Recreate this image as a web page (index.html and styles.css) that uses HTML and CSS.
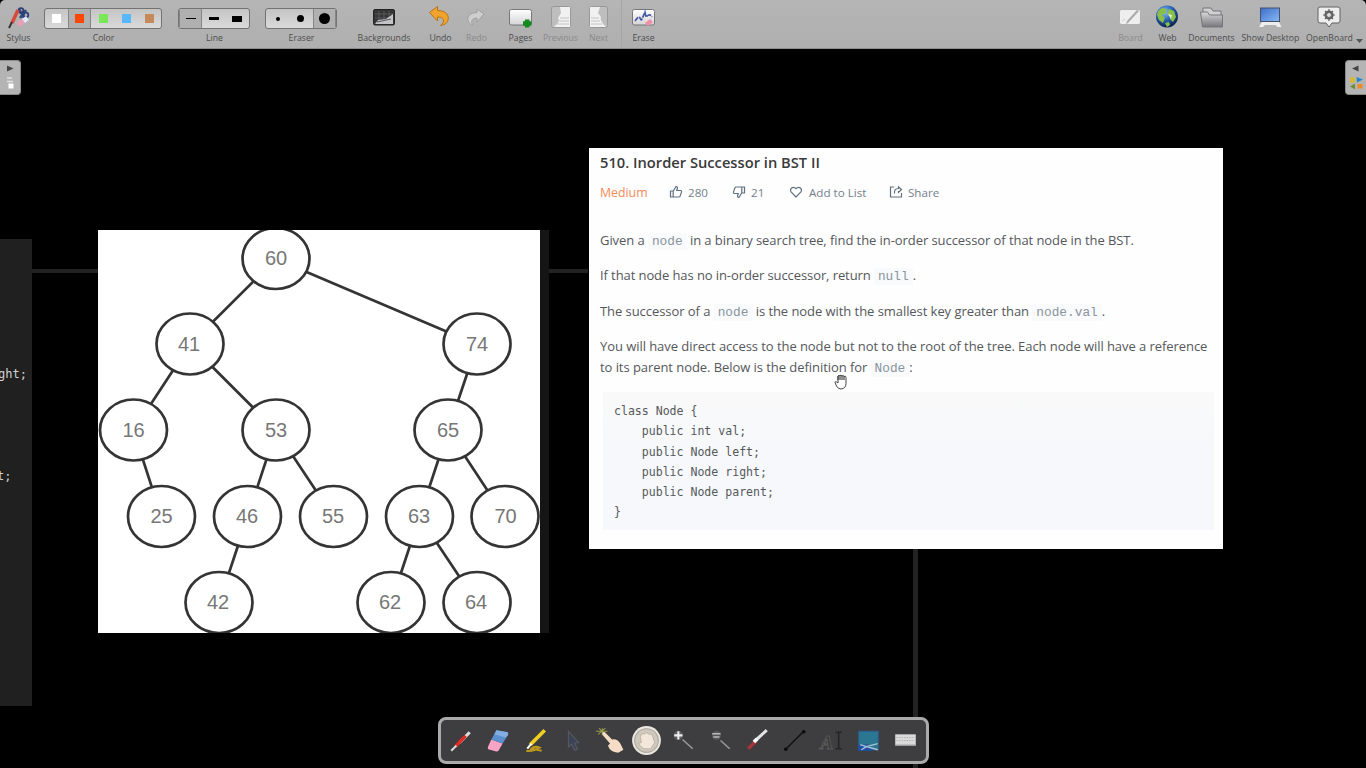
FILE: index.html
```html
<!DOCTYPE html>
<html lang="en">
<head>
<meta charset="utf-8">
<title>OpenBoard</title>
<link rel="stylesheet" href="styles.css">
</head>
<body>
<svg class="defs" width="0" height="0">
  <defs>
    <linearGradient id="sheet" x1="0" y1="0" x2="0" y2="1"><stop offset="0" stop-color="#fff"/><stop offset="1" stop-color="#d4d4d6"/></linearGradient>
    <linearGradient id="steel" x1="0" y1="0" x2="0" y2="1"><stop offset="0" stop-color="#d8d8da"/><stop offset="1" stop-color="#77777b"/></linearGradient>
    <linearGradient id="screen" x1="0" y1="0" x2="1" y2="1"><stop offset="0" stop-color="#3a6fc8"/><stop offset="1" stop-color="#8ab8f4"/></linearGradient>
    <radialGradient id="globe" cx=".4" cy=".3" r=".7"><stop offset="0" stop-color="#8fc4ff"/><stop offset=".5" stop-color="#2c66b8"/><stop offset="1" stop-color="#0a2250"/></radialGradient>
  </defs>
</svg>
<header class="toolbar">
  <div class="tool w36">
    <svg class="icon" viewBox="0 0 36 28"><path d="M19 4l5 9M26 5l-6 8" stroke="#33477f" stroke-width="2.500"/><circle cx="21" cy="5.500" r="2.300" fill="none" stroke="#2c3f78" stroke-width="1.800"/><circle cx="26" cy="10" r="2.300" fill="none" stroke="#2c3f78" stroke-width="1.800"/><path d="M18 5l-6 13" stroke="#d8493c" stroke-width="3.500"/><path d="M12 17l-3 6" stroke="#333" stroke-width="2"/><path d="M18 20l7-5" stroke="#e9a0b4" stroke-width="5"/><path d="M23.500 16l4-3" stroke="#dfe6fa" stroke-width="5"/></svg>
    <span>Stylus</span>
  </div>
  <div class="tool w134">
    <div class="choices colors">
      <i class="choice"><b class="swatch white"></b></i><i class="choice picked"><b class="swatch red"></b></i><i class="choice"><b class="swatch green"></b></i><i class="choice"><b class="swatch blue"></b></i><i class="choice"><b class="swatch brown"></b></i>
    </div>
    <span>Color</span>
  </div>
  <div class="tool w88">
    <div class="choices lines">
      <i class="choice picked"><b class="stroke thin"></b></i><i class="choice"><b class="stroke mid"></b></i><i class="choice"><b class="stroke thick"></b></i>
    </div>
    <span>Line</span>
  </div>
  <div class="tool w86">
    <div class="choices erasers">
      <i class="choice"><b class="dot small"></b></i><i class="choice"><b class="dot medium"></b></i><i class="choice picked"><b class="dot large"></b></i>
    </div>
    <span>Eraser</span>
  </div>
  <div class="tool w79">
    <svg class="icon" viewBox="0 0 36 28"><rect x="7.500" y="4.500" width="21" height="15.500" rx="1.500" fill="#353537" stroke="#222"/><path d="M9 9h18M9 13h18M13 6v12M18 6v12M23 6v12" stroke="#666" stroke-width=".7"/><path d="M9 19l3-4 8-1 7-5v10z" fill="#c4c4c6"/><path d="M11 17l14-3" stroke="#555"/></svg>
    <span>Backgrounds</span>
  </div>
  <div class="tool w34">
    <svg class="icon" viewBox="0 0 36 28"><path d="M7.500 7.500l8-6v4c9 0 12.500 5.500 10 11-1.500 2.500-3.500 3.500-7 4 5-4 4-8.500-3-8.500v4z" fill="#f0a32d" stroke="#b97512"/></svg>
    <span>Undo</span>
  </div>
  <div class="tool w38 off">
    <svg class="icon" viewBox="0 0 36 28"><path d="M26 9l-7-5v3.500c-7 0-11 4.500-8.500 9.500 1 1.800 2.500 2.700 4.500 3-3-3-1-7 4-7V17z" fill="#cecece" stroke="#a0a0a0"/></svg>
    <span>Redo</span>
  </div>
  <div class="tool w50">
    <svg class="icon" viewBox="0 0 36 28"><rect x="7.500" y="4.500" width="22" height="15.500" rx="2" fill="url(#sheet)" stroke="#77777b"/><path d="M21 18.500h8.500M25.200 14.500v8" stroke="#17881f" stroke-width="4.500"/></svg>
    <span>Pages</span>
  </div>
  <div class="tool w30 off">
    <svg class="icon" viewBox="0 0 36 28"><rect x="9.500" y="1.500" width="19" height="21" rx="2" fill="#bebebe" stroke="#999"/><path d="M18 2h10v20H12q7-6 4-9l3-5z" fill="#f1f1f1"/><path d="M18 13h9M17 16h10M15 19h12" stroke="#c4c4c4"/></svg>
    <span>Previous</span>
  </div>
  <div class="tool w46 off">
    <svg class="icon" viewBox="0 0 36 28"><rect x="9.500" y="1.500" width="18" height="21" rx="2" fill="#bebebe" stroke="#999"/><path d="M10 2h10l-2 6 3 4q-2 3 5 10H10z" fill="#f1f1f1"/><path d="M11 13h8M11 16h9M11 19h11" stroke="#c4c4c4"/></svg>
    <span>Next</span>
  </div>
  <div class="tool w44 ruled">
    <svg class="icon" viewBox="0 0 36 28"><rect x="7.500" y="4.500" width="22" height="15.500" rx="2" fill="url(#sheet)" stroke="#77777b"/><path d="M10 16q4-6 5-3t2 1l3-7 1 5q4-4 6 0" fill="none" stroke="#4658a5" stroke-width="1.700" stroke-dasharray="5 1"/><path d="M20 18l5-4 3 3-5 4z" fill="#ee8fa6"/></svg>
    <span>Erase</span>
  </div>
  <div class="spring"></div>
  <div class="tool w30 off">
    <svg class="icon" viewBox="0 0 36 28"><rect x="7.500" y="4.500" width="21" height="15" rx="2" fill="#eee" stroke="#b0b0b0"/><path d="M27 6L16 18l-2 1 1-3L25 5z" fill="#aaa"/><path d="M10 16l3-2" stroke="#ccc"/></svg>
    <span>Board</span>
  </div>
  <div class="tool w44">
    <svg class="icon" viewBox="0 0 36 28"><circle cx="18" cy="11.500" r="11" fill="url(#globe)"/><path d="M9 6l4-3 5 1-1 4-4 2 3 3-2 5-4-3-2-5zM20 4l5 2 2 6-3 5-3-3 1-3-4-1zM16 18l4-1 1 3-3 2z" fill="#8abf48"/><path d="M19 9l4 1-1 4z" fill="#dff0d0"/></svg>
    <span>Web</span>
  </div>
  <div class="tool w44">
    <svg class="icon" viewBox="0 0 36 28"><path d="M10 3h8l2 3h8v14H10z" fill="#d0d0d2" stroke="#77777b"/><path d="M7.500 7h7l2 3h13v12h-20z" fill="url(#steel)" stroke="#77777b"/></svg>
    <span>Documents</span>
  </div>
  <div class="tool w74">
    <svg class="icon" viewBox="0 0 36 28"><rect x="8.500" y="3" width="19" height="13.500" fill="url(#screen)" stroke="#45526d"/><path d="M10 17h17l2.500 5h-4l-2-2H13l-2 2H7z" fill="#eee"/></svg>
    <span>Show Desktop</span>
  </div>
  <div class="tool w44">
    <svg class="icon" viewBox="0 0 36 28"><path d="M9 2h18q2 0 2 2v12q0 2-2 2h-6l-3 4-3-4H9q-2 0-2-2V4q0-2 2-2z" fill="#eee" stroke="#626266"/><circle cx="18" cy="10" r="3.600" fill="#aaa" stroke="#606060" stroke-width="2"/><path d="M18 4v12M12 10h12M14 6l8 8M22 6l-8 8" stroke="#606060" stroke-width="1.200"/><circle cx="18" cy="10" r="2" fill="#ddd"/></svg>
    <span>OpenBoard</span>
  </div>
  <div class="more"><svg width="7" height="4" viewBox="0 0 7 4"><path d="M0 0h7L3.500 4z" fill="#555"/></svg></div>
</header>

<main class="board">
  <div class="tab left"><svg width="21" height="34" viewBox="0 0 21 34"><path d="M7 4.500l6.500 3-6.500 3z" fill="#444"/><path d="M7 17h5M7 20.500h6" stroke="#e0e0e0" stroke-width="1.300"/><rect x="8.500" y="22.500" width="5" height="5" fill="#fff"/></svg></div>
  <div class="tab right"><svg width="20" height="34" viewBox="0 0 20 34"><path d="M12.500 4.500L6 7.500l6.500 3z" fill="#444"/><rect x="4" y="16.500" width="5" height="5" fill="#d9b92e"/><path d="M10.500 16l6.500 2.500-6 3z" fill="#2787c8"/><path d="M9 22.500v6L4 25.500z" fill="#6d8f3c"/><rect x="11.500" y="23" width="5" height="4.500" fill="#f28a2a"/></svg></div>
  <div class="wire across"></div>
  <div class="wire down"></div>
  <pre class="editor"><span class="frag one">ght;</span><span class="frag two">t;</span></pre>
  <div class="shade"></div>

  <svg class="tree" viewBox="98 230 442 403">
    <g class="edges"><path d="M276 259L190 344.500M276 259L477 344.500M190 344.500L133.500 430.500M190 344.500L276 430.500M477 344.500L448 430.500M133.500 430.500L161.500 517M276 430.500L247.500 517M276 430.500L333.500 517M448 430.500L419.500 517M448 430.500L505 517M247.500 517L219 603M419.500 517L391 603M419.500 517L477 603"/></g>
    <g class="nodes">
      <ellipse cx="276" cy="258.500" rx="33.500" ry="30.500"/><ellipse cx="190" cy="344" rx="33.500" ry="30.500"/><ellipse cx="477" cy="344" rx="33.500" ry="30.500"/><ellipse cx="133.500" cy="430" rx="33.500" ry="30.500"/><ellipse cx="276" cy="430" rx="33.500" ry="30.500"/><ellipse cx="448" cy="430" rx="33.500" ry="30.500"/><ellipse cx="161.500" cy="516.500" rx="33.500" ry="30.500"/><ellipse cx="247.500" cy="516.500" rx="33.500" ry="30.500"/><ellipse cx="333.500" cy="516.500" rx="33.500" ry="30.500"/><ellipse cx="419.500" cy="516.500" rx="33.500" ry="30.500"/><ellipse cx="505" cy="516.500" rx="33.500" ry="30.500"/><ellipse cx="219" cy="602.500" rx="33.500" ry="30.500"/><ellipse cx="391" cy="602.500" rx="33.500" ry="30.500"/><ellipse cx="477" cy="602.500" rx="33.500" ry="30.500"/>
    </g>
    <g class="keys">
      <text x="276" y="265.500">60</text><text x="189" y="351.500">41</text><text x="477" y="351.500">74</text><text x="133.500" y="438">16</text><text x="276" y="438">53</text><text x="448" y="438">65</text><text x="161.500" y="524">25</text><text x="247" y="524">46</text><text x="333" y="524">55</text><text x="419" y="524">63</text><text x="505.500" y="524">70</text><text x="218" y="610">42</text><text x="390" y="610">62</text><text x="476" y="610">64</text>
    </g>
  </svg>

  <article class="problem">
    <h1>510. Inorder Successor in BST II</h1>
    <div class="meta">
      <span class="level">Medium</span>
      <span class="stat s1"><svg width="14" height="14" viewBox="0 0 14 14"><path d="M1.500 6h2.700v6H1.500zM4.200 6.200L7 1.500c1.500 0 1.700 1 1.300 2.300L7.800 5.500h3.700c1 0 1.300.8 1 1.600l-1.400 4c-.2.600-.6.900-1.200.9H4.200"/></svg>280</span>
      <span class="stat s2"><svg width="14" height="14" viewBox="0 0 14 14"><path d="M12.500 8H9.800V2h2.700zM9.800 7.800L7 12.500c-1.500 0-1.700-1-1.300-2.300l.5-1.700H2.500c-1 0-1.300-.8-1-1.600l1.400-4c.2-.6.600-.9 1.200-.9h5.700"/></svg>21</span>
      <span class="stat s3"><svg width="14" height="14" viewBox="0 0 14 14"><path d="M7 12L2.300 7.200C-.2 4.200 4 .3 7 3.700c3-3.400 7.200.5 4.700 3.500z"/></svg>Add to List</span>
      <span class="stat s4"><svg width="14" height="14" viewBox="0 0 14 14"><path d="M5 2H1.500v10h11V8M5.500 8.500c-.5-3 1-5 4-5V1.800l3 2.700-3 2.800V6"/></svg>Share</span>
    </div>
    <p class="p1">Given a <code>node</code> in a binary search tree, find the in-order successor of that node in the BST.</p>
    <p class="p2">If that node has no in-order successor, return <code>null</code>.</p>
    <p class="p3">The successor of a <code>node</code> is the node with the smallest key greater than <code>node.val</code>.</p>
    <p class="p4">You will have direct access to the node but not to the root of the tree. Each node will have a reference</p>
    <p class="p5">to its parent node. Below is the definition for <code>Node</code>:</p>
    <pre class="listing">class Node {
    public int val;
    public Node left;
    public Node right;
    public Node parent;
}</pre>
  </article>

  <svg class="cursor" width="14" height="18" viewBox="0 0 14 18"><path d="M4 9V3q1-1.500 2 0 .500-2 2 0 1.500-1.500 2 .500 2-1 2 1v6q0 5-5 5.500-3 0-4.500-3L1 9.500q0-2 3 .500z" fill="#fff" stroke="#444"/><path d="M4 3v4M6 3v4M8 3v4M10 3v4" stroke="#444" stroke-width="1.200"/></svg>

  <nav class="palette">
    <svg viewBox="0 0 36 36"><path d="M16 20L26 10" stroke="#dcdcdc" stroke-width="3"/><path d="M12 24l10-10.500" stroke="#e02a24" stroke-width="3.200"/><path d="M8 28l5-5" stroke="#ddd" stroke-width="2"/></svg>
    <svg viewBox="0 0 36 36"><path d="M11 17l11 4-4 7q-1 1-3 .5l-7-2q-1-1 0-3z" fill="#f7a4c4"/><path d="M16 8l11 2q1 1 0 3l-5 8-11-4z" fill="#5c8fce"/><path d="M16 8l11 2q1 1 0 3l-2 2-11-3z" fill="#84aee2"/></svg>
    <svg viewBox="0 0 36 36"><path d="M9 28q7 1 13-3-5-2-8 1 6 1 10 2" fill="none" stroke="#bd971d" stroke-width="2"/><path d="M13 22L27 8" stroke="#f1cf20" stroke-width="3.500"/><path d="M10 26l4-5" stroke="#fff" stroke-width="2"/></svg>
    <svg viewBox="0 0 36 36"><path d="M14 9l10 11-4 .5 3 6-3 1-3-6-3 3z" fill="#3c4454" stroke="#565b66"/></svg>
    <svg viewBox="0 0 36 36"><path d="M11 6v7M5 9h11M7 12l7-6M8 6l6 7" stroke="#9b9b48"/><path d="M11.500 10q1.500-1 3 1l6 6q5-1 8 4l3 6-5 3q-8-1-10-7l2-2-7-8q-1-2 0-3z" fill="#f5dcc4"/></svg>
    <svg viewBox="0 0 36 36"><circle cx="18" cy="18" r="14" fill="#eae7e0"/><circle cx="18" cy="18" r="11.500" fill="#cfc9bd" stroke="#aaa59a"/><path d="M12 14q2-4 4-2 2-3 4 0 3-1 4 2l2 6-4 6h-7l-5-5 3-1z" fill="#f2e7d8" stroke="#aaa091" stroke-width=".6"/></svg>
    <svg viewBox="0 0 36 36"><path d="M17 17l10 9" stroke="#999" stroke-width="1.500"/><circle cx="13" cy="13" r="4.500" fill="#5c5c5c"/><path d="M9 13h8M13 9v8" stroke="#eee" stroke-width="2"/></svg>
    <svg viewBox="0 0 36 36"><path d="M18 18l9 8" stroke="#999" stroke-width="1.500"/><circle cx="14" cy="13" r="4.500" fill="#555"/><path d="M10 11.500h8M11 14.500h6" stroke="#bbb" stroke-width="1.500"/></svg>
    <svg viewBox="0 0 36 36"><path d="M16 18l11-10" stroke="#e4e4e4" stroke-width="3"/><path d="M9 26l8-8" stroke="#a8343b" stroke-width="3.200"/><path d="M14.500 19.500l3-3" stroke="#fff" stroke-width="3.500"/></svg>
    <svg viewBox="0 0 36 36"><path d="M9 27L27 9" stroke="#111" stroke-width="1.500"/><circle cx="9.500" cy="26.500" r="1.700" fill="#090909"/><circle cx="27" cy="9.500" r="1.700" fill="#090909"/></svg>
    <svg viewBox="0 0 36 36"><text x="7" y="26" class="letter">A</text><path d="M22 10h6M25 10v16M22 26h6" fill="none" stroke="#242424" stroke-width="1.500"/></svg>
    <svg viewBox="0 0 36 36"><rect x="8.500" y="9" width="19" height="18" fill="#2b7690" stroke="#2b5f92"/><path d="M8 22h10l4 6H8z" fill="#1f4fa6"/><path d="M27 21l-11 3M27 27l-11-3M16 24l-6-2M16 24l-5 3" stroke="#a9c4d0" stroke-width="1.300"/></svg>
    <svg viewBox="0 0 36 36"><rect x="8" y="12" width="20" height="11" fill="#dadada"/><path d="M9 15h18M9 18h18" stroke="#b5b5b5" stroke-dasharray="1.500 1"/><path d="M8 22.500h20" stroke="#999"/></svg>
  </nav>
</main>
</body>
</html>
```
FILE: styles.css
```css
* { box-sizing: border-box; }
body { margin: 0; width: 1366px; height: 768px; overflow: hidden; background: #000; display: flex; flex-direction: column; font-family: "Open Sans", "Noto Sans", sans-serif; }
.defs { position: absolute; }
.toolbar { height: 49px; flex: none; display: flex; background: linear-gradient(#b5b5b5, #afafaf); border-bottom: 1px solid #8c8c8c; border-radius: 5px 5px 0 0; }
.tool { flex: none; display: flex; flex-direction: column; align-items: center; padding-top: 5px; color: #4c4c4c; font-size: 8.700px; line-height: 12px; white-space: nowrap; }
.tool span { margin-top: -1px; padding-left: 1px; }
.tool.off { color: #8a8a8a; }
.icon { width: 36px; height: 28px; flex: none; }
.ruled { box-shadow: inset 1px 0 #a6a6a6; }
.w30 { width: 30px; } .w34 { width: 34px; } .w36 { width: 36px; } .w38 { width: 38px; }
.w44 { width: 44px; } .w46 { width: 46px; } .w50 { width: 50px; } .w74 { width: 74px; }
.w79 { width: 79px; } .w86 { width: 86px; } .w88 { width: 88px; } .w134 { width: 134px; }
.spring { flex: 1; }
.more { width: 15px; padding: 35px 0 0 5px; line-height: 4px; }
.choices { display: flex; height: 21px; margin: 3px 0 4px; border: 1px solid #737373; border-radius: 3px; background: linear-gradient(#c4c4c4, #dadada); overflow: hidden; }
.colors { width: 118px; } .lines, .erasers { width: 72px; }
.choice { flex: 1; display: flex; align-items: center; justify-content: center; }
.picked { background: #b0b0b0; box-shadow: inset 1px 0 #858585, inset -1px 0 #858585; }
.swatch { width: 9px; height: 9px; }
.white { background: #fff; } .red { background: #ff4500; } .green { background: #78e858; } .blue { background: #58b8ff; } .brown { background: #c58a5c; }
.stroke { width: 10px; background: #000; }
.thin { height: 1px; } .mid { height: 3px; } .thick { height: 6px; }
.dot { border-radius: 50%; background: #000; }
.small { width: 4px; height: 4px; } .medium { width: 7px; height: 7px; } .large { width: 11px; height: 11px; }

.board { flex: 1; position: relative; background: #000; overflow: hidden; }
.tab { position: absolute; top: 11px; height: 35px; background: #b4b4b4; border: 1px solid #8a8a8a; }
.tab svg { display: block; }
.left { left: 0; width: 21px; border-left: 0; border-radius: 0 4px 4px 0; }
.right { right: 0; width: 21px; border-right: 0; border-radius: 4px 0 0 4px; }
.wire { position: absolute; background: #222; }
.across { left: 32px; top: 220px; width: 556px; height: 4px; }
.down { left: 913px; top: 500px; width: 5px; height: 219px; }
.editor { position: absolute; left: 0; top: 190px; width: 32px; height: 467px; margin: 0; background: #202021; color: #d0d0d0; font: 12px/14px "DejaVu Sans Mono", monospace; overflow: hidden; }
.frag { position: absolute; }
.one { left: -2px; top: 128px; } .two { left: -3px; top: 230px; }
.shade { position: absolute; left: 540px; top: 181px; width: 9px; height: 403px; background: #151515; }
.tree { position: absolute; left: 98px; top: 181px; width: 442px; height: 403px; background: #fff; }
.edges, .nodes { stroke: #343434; stroke-width: 2.7px; fill: #fff; }
.keys { font: 20px "Liberation Sans", sans-serif; fill: #777; text-anchor: middle; transform: translateY(-.7px); }

.problem { position: absolute; left: 589px; top: 99px; width: 634px; height: 401px; padding: 4px 9px 0 11px; background: #fefefe; color: #55575b; font-size: 13px; }
.problem h1 { margin: 0; font-size: 14.700px; line-height: 20px; font-weight: 600; color: #3a3a3a; letter-spacing: 0; white-space: nowrap; }
.meta { display: flex; height: 20px; margin-top: 10px; align-items: center; font-size: 11.600px; color: #74808c; white-space: nowrap; }
.level { width: 69px; font-size: 12.300px; color: #f58b55; }
.stat { display: flex; align-items: center; gap: 5px; }
.stat svg { margin-top: -1px; fill: none; stroke: #5f6f7e; stroke-width: 1.200px; }
.s1 { width: 63px; } .s2 { width: 57px; } .s3 { width: 100px; gap: 6px; }
.problem p { margin: 0; height: 21px; line-height: 21px; white-space: nowrap; letter-spacing: -.06px; }
.problem .p1 { margin-top: 28px; letter-spacing: -.07px; }
.problem .p2 { margin-top: 14px; letter-spacing: -.09px; }
.problem .p3, .problem .p4 { margin-top: 14.500px; }
.problem code { font: 12.800px "Liberation Mono", monospace; letter-spacing: 0; color: #8a949d; background: #f8fafc; padding: 1px 4px; }
.listing { margin: 14px 0 0 3px; height: 138px; padding: 9px 0 0 11px; background: linear-gradient(#f9f9f9, #f6f8fb 50%); font: 11.550px/20.250px "DejaVu Sans Mono", monospace; color: #55585b; }
.cursor { position: absolute; left: 834px; top: 324px; }
.palette { position: absolute; left: 438px; top: 668px; width: 491px; height: 47px; padding: 0 1px 0 2px; display: flex; align-items: center; border: 3px solid #aaa; border-radius: 8px; background: #3e3e40; }
.palette svg { width: 37px; height: 37px; flex: none; }
.letter { font: italic bold 19px "Liberation Serif", serif; fill: #3a3a3a; stroke: #707070; stroke-width: .5px; }
```
